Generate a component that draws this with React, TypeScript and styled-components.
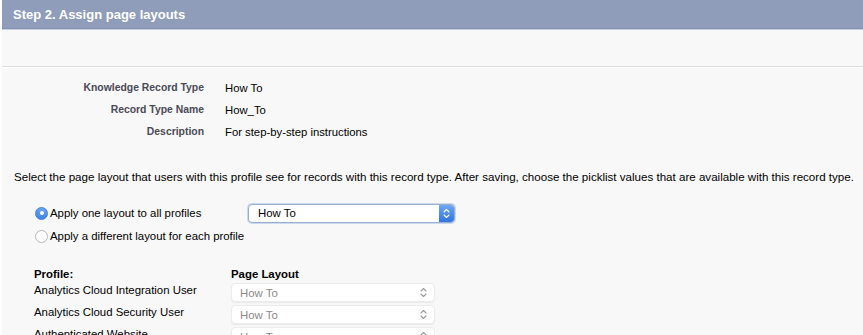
import React from "react";
import styled, { createGlobalStyle } from "styled-components";

const GlobalStyle = createGlobalStyle`
  html, body {
    margin: 0;
    padding: 0;
    background: #ffffff;
  }
  body {
    font-family: "Liberation Sans", Arial, sans-serif;
    color: #000;
  }
`;

const Page = styled.div`
  width: 863px;
  height: 335px;
  overflow: hidden;
  background: #f8f8f8;
  border-left: 2px solid #ffffff;
  box-sizing: border-box;
`;

const Header = styled.div`
  height: 28px;
  background: #8f9dbb;
  border-bottom: 1px solid #8593b3;
  box-shadow: 0 1px 0 #c9cfdc;
  display: flex;
  align-items: center;
  padding-left: 11px;
  font-size: 13px;
  font-weight: bold;
  color: #ffffff;
`;

const Blank = styled.div`
  height: 36px;
  border-bottom: 1px solid #dcdcdc;
  margin-top: 1px;
`;

const Details = styled.div`
  border-top: 1px solid #ffffff;
  padding-top: 9px;
  display: grid;
  grid-template-columns: 202px auto;
  column-gap: 21px;
`;

const Label = styled.div`
  height: 22px;
  line-height: 22px;
  text-align: right;
  font-size: 10.4px;
  font-weight: bold;
  color: #4a4a56;
`;

const Value = styled.div`
  height: 22px;
  line-height: 22px;
  font-size: 11.3px;
  color: #000;
`;

const Instructions = styled.p`
  margin: 27px 0 0 12px;
  font-size: 11.6px;
  line-height: 14px;
  letter-spacing: -0.01px;
  color: #000;
  white-space: nowrap;
`;

const Choices = styled.div`
  margin: 19px 0 0 33px;
  display: flex;
  flex-direction: column;
  gap: 3px;
`;

const ChoiceRow = styled.div`
  display: flex;
  align-items: center;
  height: 20px;
`;

const Radio = styled.span<{ $checked?: boolean }>`
  width: 13px;
  height: 13px;
  border-radius: 50%;
  box-sizing: border-box;
  margin-right: 2px;
  display: inline-flex;
  align-items: center;
  justify-content: center;
  background: ${({ $checked }) =>
    $checked ? "linear-gradient(#6aa6f2, #3c84e4)" : "#ffffff"};
  border: 1px solid ${({ $checked }) => ($checked ? "#3f7fd8" : "#b8b8b8")};
  &::after {
    content: "";
    width: 4px;
    height: 4px;
    border-radius: 50%;
    background: #ffffff;
    display: ${({ $checked }) => ($checked ? "block" : "none")};
  }
`;

const ChoiceText = styled.span<{ $width?: number }>`
  font-size: 11.4px;
  color: #000;
  width: ${({ $width }) => ($width ? `${$width}px` : "auto")};
`;

const Select = styled.div<{ $width: number; $disabled?: boolean }>`
  width: ${({ $width }) => $width}px;
  height: 19px;
  box-sizing: border-box;
  display: flex;
  align-items: center;
  border-radius: 4px;
  background: #ffffff;
  border: 1px solid ${({ $disabled }) => ($disabled ? "#ececec" : "#9aaed0")};
  box-shadow: ${({ $disabled }) =>
    $disabled ? "0 1px 1px rgba(0,0,0,0.06)" : "0 0 0 1px rgba(120,160,220,0.35)"};
  font-size: 11.4px;
  color: ${({ $disabled }) => ($disabled ? "#8a8a8a" : "#000")};
  padding-left: ${({ $disabled }) => ($disabled ? "8px" : "9px")};
  overflow: hidden;
`;

const SelectText = styled.span`
  flex: 1;
`;

const Stepper = styled.span<{ $active?: boolean }>`
  width: 15px;
  height: 100%;
  display: flex;
  align-items: center;
  justify-content: center;
  background: ${({ $active }) =>
    $active ? "linear-gradient(#6ea8f3, #2f74df)" : "transparent"};
  border-radius: 0 3px 3px 0;
  margin-right: ${({ $active }) => ($active ? "0" : "3px")};
`;

const Table = styled.div`
  margin: 21px 0 0 32px;
  display: grid;
  grid-template-columns: 197px 204px;
  row-gap: 3px;
`;

const HeadCell = styled.div`
  font-size: 11.4px;
  font-weight: bold;
  color: #000;
  height: 14px;
  line-height: 14px;
  margin-bottom: -1px;
`;

const ProfileName = styled.div`
  font-size: 11.4px;
  color: #000;
  height: 19px;
  line-height: 15px;
`;

const Chevrons: React.FC<{ color: string }> = ({ color }) => (
  <svg width="7" height="11" viewBox="0 0 7 11">
    <path
      d="M1 4 L3.5 1.5 L6 4 M1 7 L3.5 9.5 L6 7"
      fill="none"
      stroke={color}
      strokeWidth="1.1"
      strokeLinecap="round"
      strokeLinejoin="round"
    />
  </svg>
);

const details = [
  ["Knowledge Record Type", "How To"],
  ["Record Type Name", "How_To"],
  ["Description", "For step-by-step instructions"],
];

const profiles = [
  "Analytics Cloud Integration User",
  "Analytics Cloud Security User",
  "Authenticated Website",
];

const App: React.FC = () => {
  return (
    <>
      <GlobalStyle />
      <Page>
        <Header>Step 2. Assign page layouts</Header>
        <Blank />
        <Details>
          {details.map(([label, value]) => (
            <React.Fragment key={label}>
              <Label>{label}</Label>
              <Value>{value}</Value>
            </React.Fragment>
          ))}
        </Details>
        <Instructions>
          Select the page layout that users with this profile see for records with this record
          type. After saving, choose the picklist values that are available with this record type.
        </Instructions>
        <Choices>
          <ChoiceRow>
            <Radio $checked />
            <ChoiceText $width={198}>Apply one layout to all profiles</ChoiceText>
            <Select $width={207}>
              <SelectText>How To</SelectText>
              <Stepper $active>
                <Chevrons color="#ffffff" />
              </Stepper>
            </Select>
          </ChoiceRow>
          <ChoiceRow>
            <Radio />
            <ChoiceText>Apply a different layout for each profile</ChoiceText>
          </ChoiceRow>
        </Choices>
        <Table>
          <HeadCell>Profile:</HeadCell>
          <HeadCell>Page Layout</HeadCell>
          {profiles.map((p) => (
            <React.Fragment key={p}>
              <ProfileName>{p}</ProfileName>
              <Select $width={204} $disabled>
                <SelectText>How To</SelectText>
                <Stepper>
                  <Chevrons color="#9a9a9a" />
                </Stepper>
              </Select>
            </React.Fragment>
          ))}
        </Table>
      </Page>
    </>
  );
};

export default App;
